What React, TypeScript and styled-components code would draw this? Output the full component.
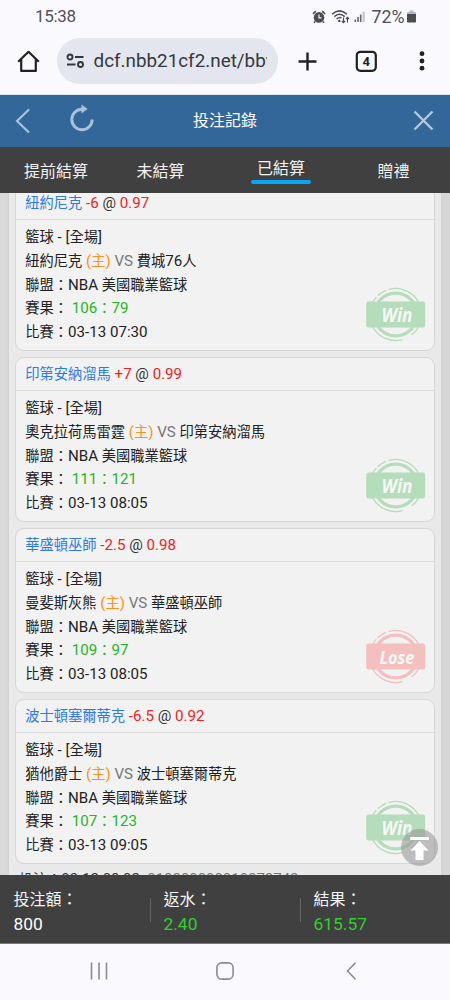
import React from "react";
import styled, { createGlobalStyle } from "styled-components";

const Global = createGlobalStyle`
  * { box-sizing: border-box; }
  body { margin: 0; background: #f9f9fe; font-family: Roboto, "Noto Sans CJK TC", sans-serif; }
  svg { display: block; flex: none; }
`;

const Screen = styled.div`
  width: 450px;
  height: 1000px;
  display: flex;
  flex-direction: column;
  overflow: hidden;
`;

const StatusBar = styled.div`
  height: 33px;
  padding: 0 34px 0 35px;
  display: flex;
  align-items: center;
  justify-content: space-between;
  color: #505155;
  font-size: 17px;
  line-height: 33px;
  flex: none;
`;
const Clock = styled.span`
  letter-spacing: -0.3px;
`;
const StatusIcons = styled.div`
  display: flex;
  align-items: center;
  svg + svg {
    margin-left: 4.5px;
  }
`;
const Percent = styled.span`
  font-size: 17.8px;
  margin: 0 2.5px 0 5px;
`;

const BrowserBar = styled.div`
  height: 62px;
  flex: none;
  display: flex;
  align-items: flex-start;
  padding: 4.5px 0 0 17px;
  border-bottom: 1px solid #dbe2f1;
`;
const BarIcon = styled.div<{ $w: number }>`
  width: ${(p) => p.$w}px;
  height: 47px;
  display: flex;
  align-items: center;
`;
const AddressPill = styled.div`
  width: 221px;
  height: 46.5px;
  border-radius: 24px;
  background: #e3e6ef;
  display: flex;
  align-items: center;
  padding-left: 9px;
  margin-right: 20px;
`;
const Url = styled.span`
  width: 173.5px;
  margin-left: 9px;
  overflow: hidden;
  white-space: nowrap;
  font-size: 18.85px;
  line-height: 30px;
  padding-top: 1px;
  color: #36373c;
`;

const TitleBar = styled.header`
  height: 51.5px;
  flex: none;
  background: #33679a;
  display: flex;
  align-items: center;
  padding: 0 16px 0 15px;
`;
const Title = styled.h1`
  flex: 1;
  margin: 0 0 0 1px;
  text-align: center;
  color: #fff;
  font-weight: 400;
  font-size: 16px;
  line-height: 51px;
`;
const TitleSide = styled.div<{ $end?: boolean }>`
  width: 79.5px;
  display: flex;
  align-items: center;
  justify-content: ${(p) => (p.$end ? "flex-end" : "space-between")};
`;

const Tabs = styled.nav`
  height: 46.5px;
  flex: none;
  background: #404040;
  display: grid;
  grid-template-columns: 112px 97px 144px 81px;
  justify-items: center;
`;
const Tab = styled.div`
  color: #f2f2f2;
  font-size: 16px;
  line-height: 24px;
  padding-top: 13px;
`;
const ActiveTab = styled(Tab)`
  padding-top: 10px;
  &::after {
    content: "";
    display: block;
    height: 4px;
    margin: -0.5px -6px 0;
    border-radius: 2px;
    background: #06a5f6;
  }
`;

const Viewport = styled.main`
  height: 682px;
  flex: none;
  overflow: hidden;
  background: linear-gradient(90deg, #d9d9d9 0 7px, #cfcfcf 9px 440px, #d6d6d6 443px);
  padding: 0 9.5px 0 9px;
  position: relative;
`;
const Panel = styled.div`
  background: #e9e9e9;
  height: 690px;
  padding: 0 5.5px 0 6px;
`;
const CardList = styled.div`
  margin-top: -7px;
  display: flex;
  flex-direction: column;
  gap: 6px;
`;
const Card = styled.article`
  position: relative;
  height: 165px;
  flex: none;
  border: 1px solid #d7d7d7;
  border-radius: 9px;
  background: #f2f2f2;
  font-size: 14.25px;
  color: #222;
`;
const CardHead = styled.div`
  height: 33px;
  border-bottom: 1px solid #dcdcdc;
  padding-left: 9.3px;
  line-height: 32px;
  color: #333;
  white-space: pre;
`;
const CardBody = styled.div`
  padding: 6px 0 0 9.3px;
`;
const Line = styled.div`
  height: 23.8px;
  line-height: 23.8px;
  white-space: pre;
`;
const Latin = styled.span`
  font-size: 1.06em;
`;
const Tint = styled.span<{ $c: string }>`
  color: ${(p) => p.$c};
`;
const StampBox = styled.div`
  position: absolute;
  right: 8.5px;
  bottom: 7.5px;
`;
const Placed = styled.div`
  padding: 3px 0 0 4px;
  font-size: 14.1px;
  line-height: 24px;
  color: #333;
  white-space: pre;
`;
const TopButton = styled.button`
  position: absolute;
  right: 12px;
  bottom: 9px;
  width: 37px;
  height: 37px;
  padding: 0;
  border: 0;
  border-radius: 50%;
  background: rgba(150, 150, 150, 0.58);
`;

const Totals = styled.footer`
  height: 69px;
  flex: none;
  background: #404040;
  border-bottom: 1px solid #77777a;
  display: grid;
  grid-template-columns: 151px 150px 149px;
`;
const Total = styled.div<{ $pad: number }>`
  display: flex;
  align-items: center;
  justify-content: space-between;
  padding: 2px 0 0 ${(p) => p.$pad}px;
  color: #f5f5f5;
  font-size: 16px;
  line-height: 24px;
`;
const TotalLabel = styled.div`
  height: 23.5px;
  margin-top: 3.5px;
`;
const TotalValue = styled.div<{ $green?: boolean }>`
  height: 24px;
  color: ${(p) => (p.$green ? "#31cf31" : "#fff")};
  font-size: 17.4px;
`;
const Rule = styled.i`
  width: 1px;
  height: 24px;
  background: #666;
`;
const NavBar = styled.div`
  flex: 1;
  display: grid;
  grid-template-columns: 26px 18px 26px;
  column-gap: 104px;
  justify-content: center;
  justify-items: center;
  align-items: center;
  padding: 0 0 2px 0;
`;

const arc = (from: number, to: number) => {
  const pt = (deg: number) => {
    const a = (deg * Math.PI) / 180;
    return `${(29.7 + 26 * Math.cos(a)).toFixed(2)} ${(27.5 + 26 * Math.sin(a)).toFixed(2)}`;
  };
  return `M${pt(from)}A26 26 0 0 1 ${pt(to)}`;
};
const outerRing = [arc(-106, -28), arc(-134, -112), arc(-152, -138), arc(75, 152), arc(28, 52)].join("");

const Stamp = ({ win }: { win: boolean }) => {
  const c = win ? "#b5dcbb" : "#f3bfbf";
  return (
    <StampBox>
      <svg width="60" height="56" viewBox="0 0 60 56" fill="none">
        <circle cx="29.7" cy="27.5" r="21.4" stroke={c} strokeWidth="3.2" />
        <path d={outerRing} stroke={c} strokeWidth="1.3" />
        <rect x="0.2" y="14.5" width="59" height="26" rx="2.5" fill={c} />
        <text x="31" y="34.5" textAnchor="middle" fill="#f5f8f5" fontFamily="Open Sans" fontWeight="700" fontStyle="italic" fontSize={win ? 19.5 : 18.5} textLength={win ? 31 : 35} lengthAdjust="spacingAndGlyphs">
          {win ? "Win" : "Lose"}
        </text>
      </svg>
    </StampBox>
  );
};

const bets = [
  { pick: "紐約尼克", line: "-6", odds: "0.97", home: "紐約尼克", away: "費城76人", score: "106：79", time: "03-13 07:30", win: true },
  { pick: "印第安納溜馬", line: "+7", odds: "0.99", home: "奧克拉荷馬雷霆", away: "印第安納溜馬", score: "111：121", time: "03-13 08:05", win: true },
  { pick: "華盛頓巫師", line: "-2.5", odds: "0.98", home: "曼斐斯灰熊", away: "華盛頓巫師", score: "109：97", time: "03-13 08:05", win: false },
  { pick: "波士頓塞爾蒂克", line: "-6.5", odds: "0.92", home: "猶他爵士", away: "波士頓塞爾蒂克", score: "107：123", time: "03-13 09:05", win: true },
];

// Sets the Latin runs of a mixed string slightly larger than the Chinese ones.
const Mixed = ({ children }: { children: string }) => (
  <>
    {children.split(/([\x20-\x7e]+)/).map((run, i) => (i % 2 ? <Latin key={i}>{run}</Latin> : run))}
  </>
);

const BetCard = ({ bet }: { bet: (typeof bets)[number] }) => (
  <Card>
    <CardHead>
      <Tint $c="#2d7be2">{bet.pick}</Tint>
      <Latin>
        {" "}
        <Tint $c="#ee2222">{bet.line}</Tint> @ <Tint $c="#ee2222">{bet.odds}</Tint>
      </Latin>
    </CardHead>
    <CardBody>
      <Line><Mixed>籃球 - [全場]</Mixed></Line>
      <Line>
        {bet.home}
        <Tint $c="#f79320"><Mixed> (主)</Mixed></Tint>
        <Tint $c="#777"><Mixed> VS </Mixed></Tint>
        <Mixed>{bet.away}</Mixed>
      </Line>
      <Line><Mixed>聯盟：NBA 美國職業籃球</Mixed></Line>
      <Line>
        賽果：<Tint $c="#28b428"><Mixed>{" " + bet.score}</Mixed></Tint>
      </Line>
      <Line><Mixed>{"比賽：" + bet.time}</Mixed></Line>
    </CardBody>
    <Stamp win={bet.win} />
  </Card>
);

export default function App() {
  return (
    <Screen>
      <Global />
      <StatusBar>
        <Clock>15:38</Clock>
        <StatusIcons>
          <svg width="14" height="14" viewBox="0 0 14 14" fill="none">
            <circle cx="7" cy="7.4" r="5.3" fill="#4c4d51" />
            <path d="M1 3.800L3.800 1.200M13 3.800L10.200 1.200M3 11.500l-1 1.300M11 11.500l1 1.300" stroke="#4c4d51" strokeWidth="1.7" />
            <path d="M7 4.500V7.800H9.500" stroke="#f9f9fe" strokeWidth="1.2" />
          </svg>
          <svg width="19" height="15" viewBox="0 0 19 15" fill="none" stroke="#4c4d51">
            <path d="M1 5.200Q8.500 -1.500 16 5.200M3.300 7.600Q8.500 3 13.700 7.600M5.600 10Q8.500 7.500 10.500 9" strokeWidth="1.5" />
            <circle cx="8.3" cy="11.9" r="1.2" fill="#4c4d51" stroke="none" />
            <path d="M12.500 8.500v5M10.900 12l1.600 1.700 1.600-1.700M16.500 13.500v-5M14.900 10l1.600-1.700L18.100 10" strokeWidth="1.1" />
          </svg>
          <svg width="12" height="13" viewBox="0 0 12 13">
            <path d="M0.500 9.500h1.600V12H0.500zM3.200 7h1.600v5H3.200zM5.900 4.500h1.600V12H5.900z" fill="#66676b" />
            <path d="M8.600 1.500h2.200V12H8.600z" fill="#c6c7cc" />
          </svg>
          <Percent>72%</Percent>
          <svg width="9" height="13" viewBox="0 0 9 13">
            <path d="M2.500 0.500h4V2H8q1 0 1 1v1H0V3q0-1 1-1h1.500z" fill="#b5b6bb" />
            <path d="M0 4h9v7.500q0 1-1 1H1q-1 0-1-1z" fill="#4c4d51" />
          </svg>
        </StatusIcons>
      </StatusBar>

      <BrowserBar>
        <BarIcon $w={39.5}>
          <svg width="23" height="23" viewBox="0 0 23 23" fill="none" stroke="#202125" strokeWidth="2.2">
            <path d="M1.200 11.700L11.500 1.800L21.800 11.700M4.200 9.500V20.900H18.800V9.500" strokeLinejoin="round" />
          </svg>
        </BarIcon>
        <AddressPill>
          <svg width="19" height="16" viewBox="0 0 19 16" fill="none" stroke="#34353a" strokeWidth="1.9">
            <circle cx="4" cy="4" r="2.5" />
            <circle cx="14.5" cy="11.5" r="2.5" />
            <path d="M9 4h8.500M1 11.500h8.500" />
          </svg>
          <Url>dcf.nbb21cf2.net/bbview</Url>
        </AddressPill>
        <BarIcon $w={57}>
          <svg width="19" height="19" viewBox="0 0 19 19" stroke="#202125" strokeWidth="2.4">
            <path d="M9.500 0.500v18M0.500 9.500h18" />
          </svg>
        </BarIcon>
        <BarIcon $w={62}>
          <svg width="23" height="23" viewBox="0 0 23 23">
            <rect x="1.8" y="1.8" width="19" height="19" rx="3.5" fill="none" stroke="#202125" strokeWidth="2.2" />
            <text x="11.3" y="15.9" textAnchor="middle" fontFamily="Roboto" fontWeight="700" fontSize="13" fill="#202125">4</text>
          </svg>
        </BarIcon>
        <BarIcon $w={10}>
          <svg width="10" height="20" viewBox="0 0 10 20" fill="#202125">
            <circle cx="5" cy="2.7" r="2.4" />
            <circle cx="5" cy="10" r="2.4" />
            <circle cx="5" cy="17.2" r="2.4" />
          </svg>
        </BarIcon>
      </BrowserBar>

      <TitleBar>
        <TitleSide>
          <svg width="16" height="26" viewBox="0 0 16 26" fill="none" stroke="#a9c2dc" strokeWidth="2.2">
            <path d="M14 1.500L2 13L14 24.500" />
          </svg>
          <svg width="26" height="33" viewBox="0 0 26 33" fill="none">
            <path d="M13 5.300A10.200 10.200 0 1 0 23.200 15.500" stroke="#a9c2dc" strokeWidth="2.9" />
            <path d="M12.500 0.500L18.500 5L12.500 9.500z" fill="#a9c2dc" />
          </svg>
        </TitleSide>
        <Title>投注記錄</Title>
        <TitleSide $end>
          <svg width="21" height="21" viewBox="0 0 21 21" stroke="#b4cae0" strokeWidth="2.3">
            <path d="M1.500 1.500l18 18M19.500 1.500l-18 18" />
          </svg>
        </TitleSide>
      </TitleBar>

      <Tabs>
        <Tab>提前結算</Tab>
        <Tab>未結算</Tab>
        <ActiveTab>已結算</ActiveTab>
        <Tab>贈禮</Tab>
      </Tabs>

      <Viewport>
        <Panel>
          <CardList>
            {bets.map((b) => (
              <BetCard key={b.pick} bet={b} />
            ))}
          </CardList>
          <Placed>
            <Mixed>投注：03-12 08:02  </Mixed>
            <Tint $c="#777"><Mixed>018200000010278742</Mixed></Tint>
          </Placed>
        </Panel>
        <TopButton aria-label="top">
          <svg width="37" height="37" viewBox="0 0 37 37" fill="#fff">
            <rect x="9" y="8" width="19" height="3" rx="1" />
            <path d="M18.500 12L27.500 21.500H22.500V31H14.500V21.500H9.500z" />
          </svg>
        </TopButton>
      </Viewport>

      <Totals>
        <Total $pad={13.5}>
          <div>
            <TotalLabel>投注額：</TotalLabel>
            <TotalValue>800</TotalValue>
          </div>
          <Rule />
        </Total>
        <Total $pad={12.5}>
          <div>
            <TotalLabel>返水：</TotalLabel>
            <TotalValue $green>2.40</TotalValue>
          </div>
          <Rule />
        </Total>
        <Total $pad={12.5}>
          <div>
            <TotalLabel>結果：</TotalLabel>
            <TotalValue $green>615.57</TotalValue>
          </div>
        </Total>
      </Totals>

      <NavBar>
        <svg width="18" height="18" viewBox="0 0 18 18" stroke="#8b8c91" strokeWidth="1.6">
          <path d="M1.500 0.500v17M9 0.500v17M16.500 0.500v17" />
        </svg>
        <svg width="18" height="18" viewBox="0 0 18 18" fill="none" stroke="#8b8c91" strokeWidth="1.6">
          <rect x="0.9" y="0.9" width="16.2" height="16.2" rx="4.8" />
        </svg>
        <svg width="11" height="18" viewBox="0 0 11 18" fill="none" stroke="#8b8c91" strokeWidth="1.6">
          <path d="M9.500 0.800L1.500 9L9.500 17.200" />
        </svg>
      </NavBar>
    </Screen>
  );
}
